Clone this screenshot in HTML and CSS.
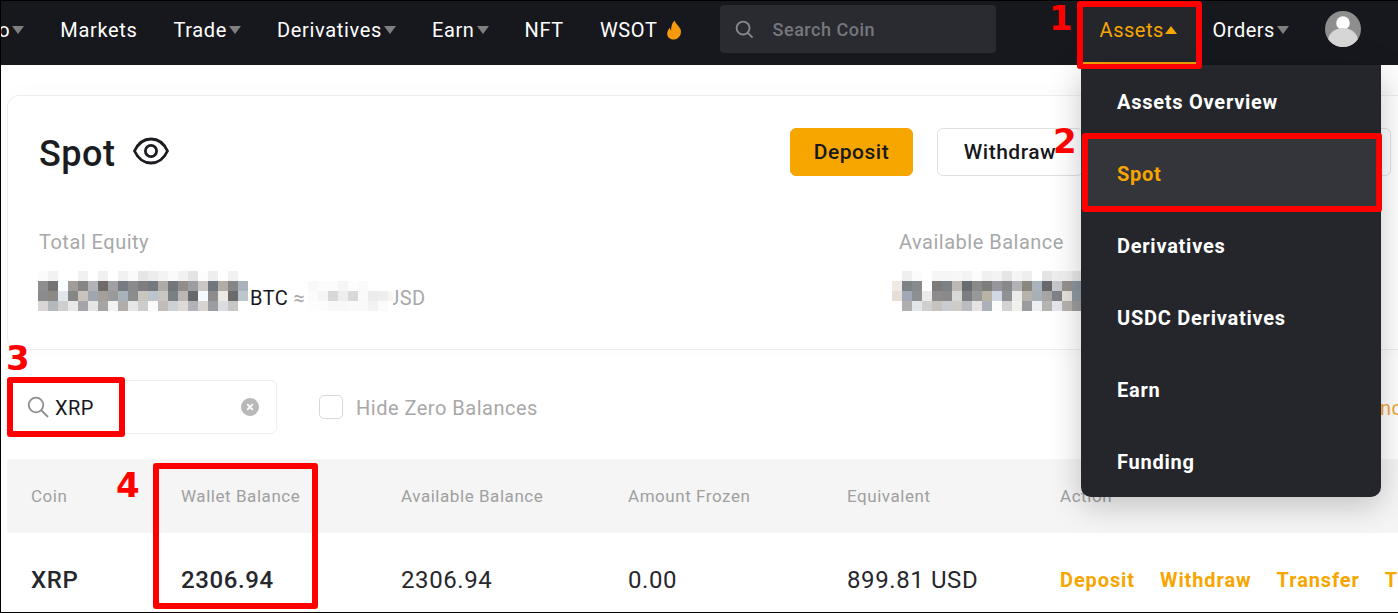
FILE: index.html
```html
<!DOCTYPE html>
<html lang="en">
<head>
<meta charset="utf-8">
<title>Spot</title>
<link rel="stylesheet" href="styles.css">
</head>
<body>
<div class="frame">
  <header class="nav">
    <div class="nav-links">
      <a class="nav-link nav-first">Crypto<i class="tri"></i></a>
      <a class="nav-link">Markets</a>
      <a class="nav-link">Trade<i class="tri"></i></a>
      <a class="nav-link">Derivatives<i class="tri"></i></a>
      <a class="nav-link">Earn<i class="tri"></i></a>
      <a class="nav-link">NFT</a>
      <a class="nav-link">WSOT
        <svg class="flame" viewBox="0 0 16 20"><path d="M8.5 0.5c.6 3 4.200 5.200 5.800 8.200 1.900 3.800-.3 10.300-6.300 10.800C2.800 19.700.3 15.800 1.500 11.700c.5-1.700 1.500-3 2.300-3.900.2 1.300.6 2.100 1.300 2.600C5 6.700 6 3 8.500.5z" fill="#f79a0e"/></svg>
      </a>
    </div>
    <div class="nav-search">
      <svg class="nav-search-icon" viewBox="0 0 20 20"><circle cx="8.500" cy="8.500" r="6.800" fill="none" stroke="#85878c" stroke-width="2"/><path d="M13.500 13.500L18.500 18.500" stroke="#85878c" stroke-width="2"/></svg>
      <span>Search Coin</span>
    </div>
    <a class="nav-link nav-assets">Assets<i class="tri tri-up"></i></a>
    <a class="nav-link nav-orders">Orders<i class="tri"></i></a>
    <svg class="avatar" viewBox="0 0 36 36"><defs><clipPath id="av"><circle cx="18" cy="18" r="18"/></clipPath></defs><g clip-path="url(#av)"><rect width="36" height="36" fill="#8e8e8e"/><circle cx="18" cy="12" r="6.800" fill="#fff"/><ellipse cx="18" cy="30" rx="15" ry="13" fill="#d6d6d6"/></g></svg>
  </header>

  <main class="main">
    <section class="card">
      <div class="card-head">
        <h1 class="title">Spot</h1>
        <svg class="eye" viewBox="0 0 36 28"><path d="M1.500 14C5 6.500 11 2 18 2s13 4.500 16.500 12C31 21.500 25 26 18 26S5 21.500 1.500 14z" fill="none" stroke="#1b1c20" stroke-width="2.800"/><circle cx="18" cy="14" r="5.600" fill="none" stroke="#1b1c20" stroke-width="2.800"/></svg>
        <div class="actions">
          <button class="btn btn-primary">Deposit</button>
          <button class="btn btn-withdraw">Withdraw</button>
          <button class="btn btn-transfer">Transfer</button>
        </div>
      </div>
      <div class="stats">
        <div class="stat stat-total">
          <div class="stat-label">Total Equity</div>
          <div class="stat-value">
            <svg class="mosaic mosaic-a" viewBox="0 0 210 40" shape-rendering="crispEdges">
              <g><rect x="0" width="10" height="10" fill="#fbfbfb"/><rect x="10" width="10" height="10" fill="#f2f2f2"/><rect x="40" width="10" height="10" fill="#f1f1f1"/><rect x="60" width="10" height="10" fill="#f0f0f0"/><rect x="80" width="10" height="10" fill="#f1f1f1"/><rect x="90" width="10" height="10" fill="#fafafa"/><rect x="100" width="10" height="10" fill="#e6e6e6"/><rect x="110" width="10" height="10" fill="#ececec"/><rect x="120" width="10" height="10" fill="#f3f3f3"/><rect x="130" width="10" height="10" fill="#fafafa"/><rect x="140" width="10" height="10" fill="#f1f1f1"/><rect x="150" width="10" height="10" fill="#e4e4e4"/><rect x="160" width="10" height="10" fill="#fdfdfd"/><rect x="170" width="10" height="10" fill="#eeeeee"/><rect x="190" width="10" height="10" fill="#f1f1f1"/></g>
              <g transform="translate(0 10)"><rect x="0" width="10" height="10" fill="#8e8e8e"/><rect x="10" width="10" height="10" fill="#747474"/><rect x="20" width="10" height="10" fill="#fafdff"/><rect x="30" width="10" height="10" fill="#a29d9a"/><rect x="40" width="10" height="10" fill="#868686"/><rect x="50" width="10" height="10" fill="#b2b3b9"/><rect x="60" width="10" height="10" fill="#6f6b69"/><rect x="70" width="10" height="10" fill="#a0a0a4"/><rect x="80" width="10" height="10" fill="#777c82"/><rect x="90" width="10" height="10" fill="#8a8a8c"/><rect x="100" width="10" height="10" fill="#7e7e82"/><rect x="110" width="10" height="10" fill="#75787c"/><rect x="120" width="10" height="10" fill="#aeaaa7"/><rect x="130" width="10" height="10" fill="#72767b"/><rect x="140" width="10" height="10" fill="#918b8b"/><rect x="150" width="10" height="10" fill="#9b9da0"/><rect x="160" width="10" height="10" fill="#cbc6c3"/><rect x="170" width="10" height="10" fill="#71767c"/><rect x="180" width="10" height="10" fill="#b1aca5"/><rect x="190" width="10" height="10" fill="#868686"/><rect x="200" width="10" height="10" fill="#a8b3be"/></g>
              <g transform="translate(0 20)"><rect x="0" width="10" height="10" fill="#8a8a8e"/><rect x="10" width="10" height="10" fill="#8c8886"/><rect x="20" width="10" height="10" fill="#e0e6ec"/><rect x="30" width="10" height="10" fill="#868684"/><rect x="40" width="10" height="10" fill="#c9c3bd"/><rect x="50" width="10" height="10" fill="#9fa6b1"/><rect x="60" width="10" height="10" fill="#a49f9b"/><rect x="70" width="10" height="10" fill="#9a9a9a"/><rect x="80" width="10" height="10" fill="#a8b2ba"/><rect x="90" width="10" height="10" fill="#8b8d8d"/><rect x="100" width="10" height="10" fill="#c9c6c2"/><rect x="110" width="10" height="10" fill="#bcc5cc"/><rect x="120" width="10" height="10" fill="#c8c6c3"/><rect x="130" width="10" height="10" fill="#7b8085"/><rect x="140" width="10" height="10" fill="#bbb7b5"/><rect x="150" width="10" height="10" fill="#69696b"/><rect x="160" width="10" height="10" fill="#f4fafd"/><rect x="170" width="10" height="10" fill="#8c8c8c"/><rect x="180" width="10" height="10" fill="#ece9e4"/><rect x="190" width="10" height="10" fill="#6b6b69"/><rect x="200" width="10" height="10" fill="#bcc6cd"/></g>
              <g transform="translate(0 30)"><rect x="0" width="10" height="10" fill="#d8d5d4"/><rect x="10" width="10" height="10" fill="#b3b8bc"/><rect x="20" width="10" height="10" fill="#cfcfcf"/><rect x="30" width="10" height="10" fill="#e9e9e9"/><rect x="40" width="10" height="10" fill="#a3a5a8"/><rect x="50" width="10" height="10" fill="#e5e5e5"/><rect x="60" width="10" height="10" fill="#a5a5a5"/><rect x="70" width="10" height="10" fill="#f3f3f3"/><rect x="80" width="10" height="10" fill="#b1adab"/><rect x="90" width="10" height="10" fill="#e6e6e6"/><rect x="100" width="10" height="10" fill="#cdcdcd"/><rect x="110" width="10" height="10" fill="#fafafa"/><rect x="120" width="10" height="10" fill="#c1bcb8"/><rect x="130" width="10" height="10" fill="#cdd0d4"/><rect x="140" width="10" height="10" fill="#dcd9d6"/><rect x="150" width="10" height="10" fill="#b2b3b9"/><rect x="160" width="10" height="10" fill="#d8d4d2"/><rect x="170" width="10" height="10" fill="#9b9da1"/><rect x="180" width="10" height="10" fill="#dbdde0"/><rect x="190" width="10" height="10" fill="#c6c6c6"/></g>
            </svg>
            <span class="btc">BTC</span>
            <span class="approx">≈</span>
            <svg class="mosaic mosaic-c" viewBox="0 0 85 30" shape-rendering="crispEdges">
              <rect width="85" height="30" fill="#fff"/>
              <g><rect x="0" width="10" height="10" fill="#f9f9f9"/><rect x="10" width="10" height="10" fill="#fcfcfc"/><rect x="20" width="10" height="10" fill="#fbfbfb"/><rect x="30" width="10" height="10" fill="#f6f6f6"/><rect x="40" width="10" height="10" fill="#fdfdfd"/><rect x="50" width="10" height="10" fill="#fafafa"/></g>
              <g transform="translate(0 10)"><rect x="0" width="10" height="10" fill="#fbfbfb"/><rect x="10" width="10" height="10" fill="#f5f5f5"/><rect x="20" width="10" height="10" fill="#d8d8d8"/><rect x="30" width="10" height="10" fill="#eeeeee"/><rect x="40" width="10" height="10" fill="#d9d9d9"/><rect x="50" width="10" height="10" fill="#fafafa"/><rect x="60" width="10" height="10" fill="#ececec"/><rect x="70" width="10" height="10" fill="#f0eeec"/><rect x="80" width="5" height="10" fill="#f9f7f5"/></g>
              <g transform="translate(0 20)"><rect x="0" width="10" height="10" fill="#fdfdfd"/><rect x="10" width="10" height="10" fill="#fcfcfc"/><rect x="20" width="10" height="10" fill="#f8f8f8"/><rect x="30" width="10" height="10" fill="#f8f8f8"/><rect x="40" width="10" height="10" fill="#fafafa"/><rect x="50" width="10" height="10" fill="#f9f9f9"/><rect x="60" width="10" height="10" fill="#f2f2f2"/><rect x="70" width="10" height="10" fill="#fbfbfb"/></g>
            </svg>
            <span class="usd">USD</span>
          </div>
        </div>
        <div class="stat stat-avail">
          <div class="stat-label">Available Balance</div>
          <div class="stat-value stat-value-b">
            <svg class="mosaic mosaic-b" viewBox="0 0 190 40" shape-rendering="crispEdges">
              <g><rect x="10" width="10" height="10" fill="#efefef"/><rect x="20" width="10" height="10" fill="#fbfbfb"/><rect x="40" width="10" height="10" fill="#f6f6f6"/><rect x="50" width="10" height="10" fill="#f6f6f6"/><rect x="60" width="10" height="10" fill="#f7f7f7"/><rect x="70" width="10" height="10" fill="#f3f3f3"/><rect x="80" width="10" height="10" fill="#fcfcfc"/><rect x="90" width="10" height="10" fill="#f0f0f0"/><rect x="100" width="10" height="10" fill="#f3f3f3"/><rect x="110" width="10" height="10" fill="#e5e5e5"/><rect x="120" width="10" height="10" fill="#f5f5f5"/><rect x="130" width="10" height="10" fill="#eeeeee"/><rect x="150" width="10" height="10" fill="#e4e4e4"/><rect x="160" width="10" height="10" fill="#eeeeee"/><rect x="170" width="10" height="10" fill="#f0f0f0"/><rect x="180" width="10" height="10" fill="#e8e8e8"/></g>
              <g transform="translate(0 10)"><rect x="0" width="10" height="10" fill="#efe9e3"/><rect x="10" width="10" height="10" fill="#7e8185"/><rect x="20" width="10" height="10" fill="#888b8e"/><rect x="40" width="10" height="10" fill="#7c7b79"/><rect x="50" width="10" height="10" fill="#7c8185"/><rect x="60" width="10" height="10" fill="#bdb8b3"/><rect x="70" width="10" height="10" fill="#686b70"/><rect x="80" width="10" height="10" fill="#8a8a8a"/><rect x="90" width="10" height="10" fill="#7e7d7b"/><rect x="100" width="10" height="10" fill="#96959e"/><rect x="110" width="10" height="10" fill="#88898a"/><rect x="120" width="10" height="10" fill="#b1b2b6"/><rect x="130" width="10" height="10" fill="#8a8781"/><rect x="140" width="10" height="10" fill="#a9b3bb"/><rect x="150" width="10" height="10" fill="#69696d"/><rect x="160" width="10" height="10" fill="#c8c8cc"/><rect x="170" width="10" height="10" fill="#979290"/><rect x="180" width="10" height="10" fill="#8c959e"/></g>
              <g transform="translate(0 20)"><rect x="0" width="10" height="10" fill="#e5dfd7"/><rect x="10" width="10" height="10" fill="#a1a7b5"/><rect x="20" width="10" height="10" fill="#8d8f91"/><rect x="30" width="10" height="10" fill="#ebebeb"/><rect x="40" width="10" height="10" fill="#8d8b8b"/><rect x="50" width="10" height="10" fill="#8a8888"/><rect x="60" width="10" height="10" fill="#d8d8d6"/><rect x="70" width="10" height="10" fill="#7b7d80"/><rect x="80" width="10" height="10" fill="#979998"/><rect x="90" width="10" height="10" fill="#b9b2a7"/><rect x="100" width="10" height="10" fill="#d1d8e3"/><rect x="110" width="10" height="10" fill="#8f9192"/><rect x="120" width="10" height="10" fill="#ebebeb"/><rect x="130" width="10" height="10" fill="#b6b2ac"/><rect x="140" width="10" height="10" fill="#a8afb5"/><rect x="150" width="10" height="10" fill="#a5a5a6"/><rect x="160" width="10" height="10" fill="#7f8288"/><rect x="170" width="10" height="10" fill="#e5e0da"/><rect x="180" width="10" height="10" fill="#8f98a2"/></g>
              <g transform="translate(0 30)"><rect x="10" width="10" height="10" fill="#b0afad"/><rect x="20" width="10" height="10" fill="#e1e6ea"/><rect x="30" width="10" height="10" fill="#cfcfcf"/><rect x="40" width="10" height="10" fill="#c6c3bf"/><rect x="50" width="10" height="10" fill="#c9ccd0"/><rect x="60" width="10" height="10" fill="#cfccc8"/><rect x="70" width="10" height="10" fill="#b9bcc0"/><rect x="80" width="10" height="10" fill="#e6e3e0"/><rect x="90" width="10" height="10" fill="#acb0b8"/><rect x="100" width="10" height="10" fill="#fbfbfb"/><rect x="110" width="10" height="10" fill="#d2d2d2"/><rect x="120" width="10" height="10" fill="#f1f0ed"/><rect x="130" width="10" height="10" fill="#9a9b9d"/><rect x="140" width="10" height="10" fill="#eeeff2"/><rect x="150" width="10" height="10" fill="#b5b4b2"/><rect x="160" width="10" height="10" fill="#e4e6ec"/><rect x="170" width="10" height="10" fill="#b5b2b0"/><rect x="180" width="10" height="10" fill="#9d9d9d"/></g>
            </svg>
          </div>
        </div>
      </div>
    </section>

    <section class="toolbar">
      <div class="coin-search">
        <svg class="coin-search-icon" viewBox="0 0 22 22"><circle cx="9" cy="9" r="7.300" fill="none" stroke="#8f8f8f" stroke-width="1.800"/><path d="M14.500 14.500L21 21" stroke="#8f8f8f" stroke-width="1.800"/></svg>
        <span class="coin-search-text">XRP</span>
        <svg class="clear" viewBox="0 0 18 18"><circle cx="9" cy="9" r="9" fill="#b8b8b8"/><path d="M6.200 6.200l5.600 5.600M11.800 6.200l-5.600 5.600" stroke="#fff" stroke-width="1.800"/></svg>
      </div>
      <label class="hide-zero"><span class="checkbox"></span><span class="hide-zero-text">Hide Zero Balances</span></label>
      <a class="tool-link">Balance</a>
    </section>

    <section class="table">
      <div class="row row-head">
        <span>Coin</span><span>Wallet Balance</span><span>Available Balance</span><span>Amount Frozen</span><span>Equivalent</span><span>Action</span>
      </div>
      <div class="row row-body">
        <span class="coin">XRP</span>
        <span class="wallet">2306.94</span>
        <span>2306.94</span>
        <span>0.00</span>
        <span>899.81 USD</span>
        <span class="ops"><a>Deposit</a><a>Withdraw</a><a>Transfer</a><a>Trade</a></span>
      </div>
    </section>
  </main>

  <nav class="menu">
    <a class="menu-item">Assets Overview</a>
    <a class="menu-item menu-active">Spot</a>
    <a class="menu-item">Derivatives</a>
    <a class="menu-item">USDC Derivatives</a>
    <a class="menu-item">Earn</a>
    <a class="menu-item">Funding</a>
  </nav>

  <div class="mark mark-1"></div>
  <div class="mark mark-2"></div>
  <div class="mark mark-3"></div>
  <div class="mark mark-4"></div>
  <span class="num num-1">1</span>
  <span class="num num-2">2</span>
  <span class="num num-3">3</span>
  <span class="num num-4">4</span>
</div>
</body>
</html>
```

FILE: styles.css
```css
* { box-sizing: border-box; }
html, body { margin: 0; padding: 0; overflow: hidden; background: #fff; }
body { font-family: Roboto, "Noto Sans", sans-serif; color: #1b1c20; letter-spacing: .5px; }
a { color: inherit; text-decoration: none; }

.frame {
  position: relative;
  width: 1398px;
  height: 613px;
  border: 1px solid #000;
  border-right-width: 0;
  overflow: hidden;
  background: #fff;
}

/* top bar */
.nav {
  display: flex;
  align-items: center;
  height: 64px;
  background: #17181e;
  color: #fff;
  font-size: 20px;
  letter-spacing: .65px;
}
.nav-links {
  display: flex;
  align-items: center;
  gap: 36px;
  margin: 0 0 6px -53px;
}
.nav-link {
  display: flex;
  align-items: center;
  white-space: nowrap;
}
.tri {
  display: block;
  width: 0;
  height: 0;
  margin: 0 0 0 2px;
  border-left: 6px solid transparent;
  border-right: 6px solid transparent;
  border-top: 8px solid #7f7f7f;
}
.tri-up {
  border-top: 0;
  border-bottom: 8px solid #f7a600;
  margin-left: 1px;
}
.flame { width: 16px; height: 20px; margin-left: 8px; }
.nav-search {
  display: flex;
  align-items: center;
  width: 276px;
  height: 48px;
  margin: 0 0 8px 38px;
  padding-left: 15px;
  border-radius: 4px;
  background: #2a2b31;
  color: #75777d;
  font-size: 18px;
  font-weight: 500;
  letter-spacing: .5px;
}
.nav-search-icon { width: 19px; height: 19px; margin-right: 19px; }
.nav-assets {
  align-self: stretch;
  width: 114px;
  margin: 0 0 1px 86px;
  padding: 0 0 3px 18px;
  background: #25262c;
  border-bottom: 2px solid #f7a600;
  color: #f7a600;
  letter-spacing: .5px;
}
.nav-orders { margin: 0 0 6px 17px; letter-spacing: .5px; }
.avatar { width: 36px; height: 36px; margin: 0 0 8px 36px; }

/* page */
.main {
  width: 1420px;
  margin-left: 6px;
}
.card {
  height: 255px;
  margin-top: 30px;
  padding: 32px 35px 0 31px;
  border: 1px solid #eeeeee;
  border-radius: 12px;
  background: #fff;
  box-shadow: 0 0 24px rgba(0, 0, 0, .025);
}
.card-head { display: flex; align-items: center; height: 48px; }
.title { margin: 4px 0 0; font-size: 36px; font-weight: 500; line-height: 48px; }
.eye { width: 36px; height: 28px; margin-left: 18px; margin-top: -2px; }
.actions { display: flex; gap: 24px; margin-left: auto; }
.btn {
  height: 48px;
  border: 1px solid #e0e0e0;
  border-radius: 6px;
  background: #fff;
  color: #17181e;
  font: 500 21px Roboto, "Noto Sans", sans-serif;
  letter-spacing: .5px;
}
.btn-primary { width: 123px; border-color: #f7a600; background: #f7a600; }
.btn-withdraw { width: 146px; }
.btn-transfer { width: 284px; }
.stats { display: flex; margin-top: 52px; }
.stat-total { width: 860px; }
.stat-label { font-size: 20px; line-height: 28px; color: #a8a8a8; }
.stat-value { display: flex; align-items: flex-start; margin-top: 15px; font-size: 20px; }
.stat-value-b { margin-left: -7px; }
.mosaic { display: block; }
.mosaic-a { width: 210px; height: 40px; margin-left: -1px; }
.mosaic-b { width: 190px; height: 40px; }
.mosaic-c { position: relative; width: 85px; height: 30px; margin: 10px -7px 0 3px; }
.btc { margin: 13px 0 0 2px; color: #17181e; line-height: 28px; }
.approx { margin: 13px 0 0 5px; color: #a8a8a8; line-height: 28px; }
.usd { margin-top: 13px; color: #a8a8a8; line-height: 28px; }

/* filter row */
.toolbar {
  display: flex;
  align-items: center;
  height: 54px;
  margin-top: 30px;
}
.coin-search {
  display: flex;
  align-items: center;
  width: 270px;
  height: 54px;
  padding: 0 17px 0 19px;
  border: 1px solid #eeeeee;
  border-radius: 6px;
}
.coin-search-icon { width: 22px; height: 22px; }
.coin-search-text { margin: 2px 0 0 6px; font-size: 20px; color: #17181e; }
.clear { width: 18px; height: 18px; margin-left: auto; }
.hide-zero { display: flex; align-items: center; margin-left: 42px; font-size: 20px; color: #a8a8a8; }
.hide-zero-text { margin-top: 2px; }
.checkbox {
  width: 24px;
  height: 24px;
  margin-right: 13px;
  border: 1px solid #d8d8d8;
  border-radius: 5px;
}
.tool-link { margin: 2px 0 0 801px; font-size: 20px; color: #f0a63a; white-space: nowrap; }

/* table */
.table { margin-top: 25px; }
.row {
  display: grid;
  grid-template-columns: 150px 220px 227px 219px 213px 1fr;
  align-items: center;
  padding-left: 24px;
}
.row-head { height: 74px; background: #f5f5f5; color: #a0a0a0; font-size: 17px; letter-spacing: .55px; }
.row-body { height: 78px; font-size: 24px; color: #26272c; padding-top: 30px; padding-bottom: 14px; letter-spacing: .6px; }
.coin, .wallet { font-weight: 500; }
.ops { display: flex; gap: 25px; font-size: 20px; font-weight: 700; letter-spacing: .9px; color: #f7a600; white-space: nowrap; }

/* dropdown */
.menu {
  position: absolute;
  left: 1080px;
  top: 64px;
  width: 300px;
  height: 432px;
  background: #25262c;
  border-radius: 0 0 10px 10px;
  box-shadow: 0 8px 32px rgba(0, 0, 0, .22);
}
.menu-item {
  display: flex;
  align-items: center;
  height: 72px;
  padding: 2px 0 0 36px;
  color: #fff;
  font-size: 20px;
  font-weight: 700;
  letter-spacing: .75px;
}
.menu-active { background: #33353b; color: #f7a600; }

/* annotation overlay */
.mark { position: absolute; border: 6px solid #f00; border-radius: 3px; }
.mark-1 { left: 1076px; top: 0; width: 125px; height: 68px; border-bottom-width: 5px; }
.mark-2 { left: 1081px; top: 132px; width: 300px; height: 79px; }
.mark-3 { left: 6px; top: 376px; width: 118px; height: 60px; }
.mark-4 { left: 152px; top: 462px; width: 165px; height: 146px; }
.num {
  position: absolute;
  font: 700 34px/1 "DejaVu Sans", sans-serif;
  letter-spacing: 0;
  color: #f00;
}
.num-1 { left: 1048px; top: 0; }
.num-2 { left: 1052px; top: 123px; }
.num-3 { left: 5px; top: 340px; }
.num-4 { left: 115px; top: 467px; }
```
